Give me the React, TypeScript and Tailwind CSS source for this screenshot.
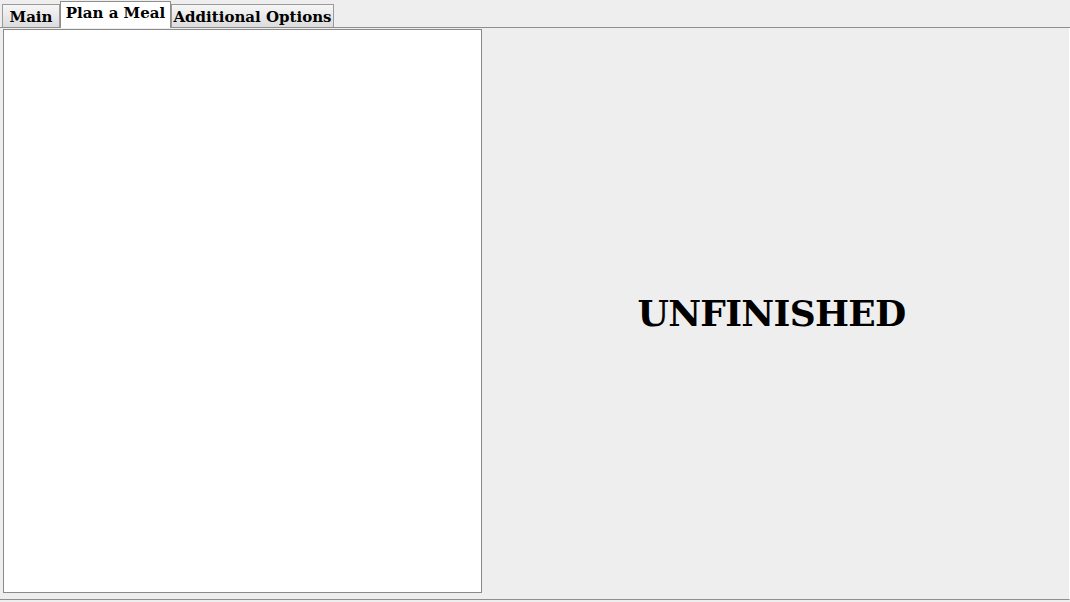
import { useState } from "react";

const tabs = [
  { name: "Main", w: "w-[58px]" },
  { name: "Plan a Meal", w: "w-[111px]" },
  { name: "Additional Options", w: "w-[163px]" },
];

export default function App() {
  const [active, setActive] = useState("Plan a Meal");

  return (
    <div className="w-[1070px] h-[602px] bg-[#eeeeee] flex flex-col font-['Bookman_Old_Style','DejaVu_Serif',serif] text-black">
      {/* tab strip */}
      <div className="h-[28px] shrink-0 flex items-end pl-[2px] border-b border-[#8e8e8e]">
        {tabs.map((t) =>
          t.name === active ? (
            <button
              key={t.name}
              onClick={() => setActive(t.name)}
              className={`${t.w} relative z-10 -mb-px h-[27px] pb-[3px] bg-white border-t border-x border-[#8e8e8e] text-[15px] font-bold leading-none`}
            >
              {t.name}
            </button>
          ) : (
            <button
              key={t.name}
              onClick={() => setActive(t.name)}
              className={`${t.w} h-[23px] pt-[2px] bg-gradient-to-b from-[#f6f6f6] to-[#dcdcdc] border-t border-x border-[#9a9a9a] text-[15px] font-bold leading-none`}
            >
              {t.name}
            </button>
          )
        )}
      </div>

      {/* tab pane */}
      <div className="flex-1 mb-[2px] flex pt-[1px] pl-[3px] pb-[6px] border-b border-[#8e8e8e] border-r border-r-white">
        <div className="w-[479px] bg-white border border-[#8a8a8a]" />
        <div className="flex-1 flex items-center justify-center pr-[8px] pt-[3px]">
          <span className="text-[36px] font-bold tracking-[-0.7px]">UNFINISHED</span>
        </div>
      </div>
    </div>
  );
}
